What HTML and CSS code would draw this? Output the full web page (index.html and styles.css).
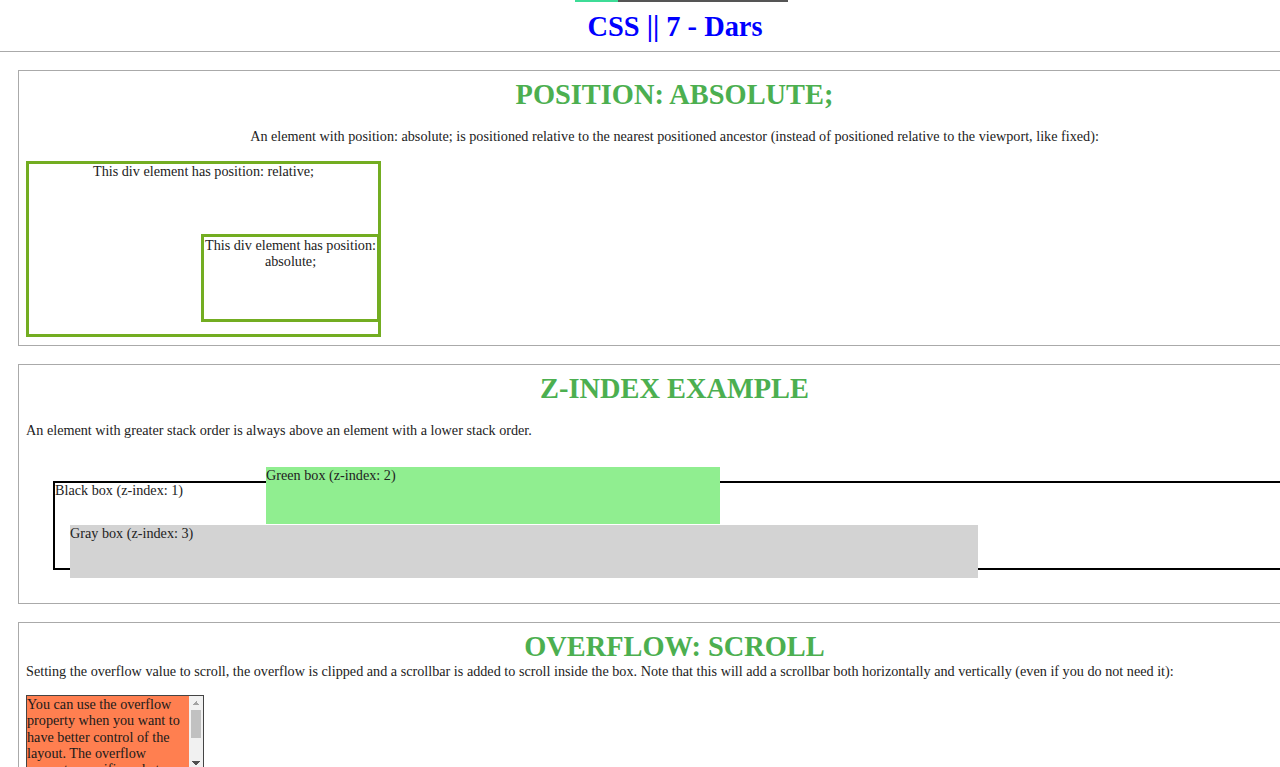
FILE: index.html
```html
<!DOCTYPE html>
<html lang="en">
<head>
<meta charset="utf-8">
<title>CSS || 7 - Dars</title>
<link rel="stylesheet" href="styles.css">
</head>
<body>
<header class="top">
  <div class="bar"></div>
  <h1 class="title">CSS || 7 - Dars</h1>
</header>
<main class="content">
  <section class="card">
    <h2 class="card-title">POSITION: ABSOLUTE;</h2>
    <p class="lead center">An element with position: absolute; is positioned relative to the nearest positioned ancestor (instead of positioned relative to the viewport, like fixed):</p>
    <div class="rel">This div element has position: relative;
      <div class="abs">This div element has position: absolute;</div>
    </div>
  </section>

  <section class="card">
    <h2 class="card-title">Z-INDEX EXAMPLE</h2>
    <p class="lead">An element with greater stack order is always above an element with a lower stack order.</p>
    <div class="zwrap">
      <div class="black">Black box (z-index: 1)</div>
      <div class="gray">Gray box (z-index: 3)</div>
      <div class="green">Green box (z-index: 2)</div>
    </div>
  </section>

  <section class="card">
    <h2 class="card-title">OVERFLOW: SCROLL</h2>
    <p class="lead tight">Setting the overflow value to scroll, the overflow is clipped and a scrollbar is added to scroll inside the box. Note that this will add a scrollbar both horizontally and vertically (even if you do not need it):</p>
    <div class="scroll">
      <div class="scroll-text">You can use the overflow property when you want to have better control of the layout. The overflow property specifies what happens if content overflows an element's box.</div>
      <div class="vbar">
        <span class="sb-btn sb-up"></span>
        <span class="sb-track"><span class="sb-thumb"></span></span>
        <span class="sb-btn sb-down"></span>
      </div>
      <div class="hbar">
        <span class="sb-btn sb-left"></span>
        <span class="sb-track-h"><span class="sb-thumb-h"></span></span>
        <span class="sb-btn sb-right"></span>
      </div>
      <div class="sb-corner"></div>
    </div>
  </section>
</main>
</body>
</html>
```

FILE: styles.css
```css
html {
  overflow: hidden;
}

body {
  margin: 0;
  width: 1350px;
  font-family: "Liberation Serif", "Times New Roman", serif;
  font-size: 14.2px;
  color: #222;
  background: #fff;
}

.top {
  border-bottom: 1px solid #aaa;
  padding-bottom: 9px;
}

.bar {
  margin-left: 575px;
  width: 213px;
  height: 2px;
  background: linear-gradient(to right, #3ddc97 0 43px, #555 43px);
}

.title {
  margin: 9px 0 0;
  font-size: 28.4px;
  line-height: 31px;
  text-align: center;
  color: #0000ff;
}

.content {
  padding: 18px 18px 0;
  display: flex;
  flex-direction: column;
  gap: 18px;
}

.card {
  border: 1px solid #aaa;
  padding: 8px 8px 8px 7px;
}

.card-title {
  margin: 0;
  font-size: 28.4px;
  line-height: 31px;
  text-align: center;
  color: #4caf50;
}

.lead {
  margin: 18px 0 0;
  line-height: 16px;
}

.lead.tight {
  margin-top: 1px;
}

.center {
  text-align: center;
}

.rel {
  position: relative;
  margin-top: 17px;
  width: 349px;
  height: 170px;
  border: 3px solid #73ad21;
  text-align: center;
  line-height: 15px;
}

.abs {
  position: absolute;
  top: 70px;
  right: -2px;
  width: 173px;
  height: 82px;
  border: 3px solid #73ad21;
  line-height: 16px;
}

.zwrap {
  position: relative;
  margin-top: 43px;
  line-height: 17px;
}

.black {
  position: relative;
  z-index: 1;
  border: 2px solid #000;
  height: 85px;
  margin: 0 26px 25px 27px;
  line-height: 15px;
}

.gray {
  position: absolute;
  z-index: 3;
  background: #d3d3d3;
  width: 70%;
  height: 53px;
  left: 44px;
  top: 44px;
}

.green {
  position: absolute;
  z-index: 2;
  background: #90ee90;
  width: 35%;
  height: 57px;
  left: 240px;
  top: -14px;
}

.scroll {
  margin-top: 16px;
  width: 176px;
  height: 88px;
  border: 1px solid #444;
  background: coral;
  display: grid;
  grid-template-columns: 1fr 14px;
  grid-template-rows: 1fr 14px;
  overflow: hidden;
}

.scroll-text {
  overflow: hidden;
  line-height: 16.33px;
  color: #1a1a1a;
}

.vbar {
  display: flex;
  flex-direction: column;
  background: #f1f1f1;
}

.hbar {
  display: flex;
  background: #f1f1f1;
}

.sb-corner {
  background: #dcdcdc;
}

.sb-btn {
  flex: 0 0 14px;
  height: 14px;
  background-repeat: no-repeat;
  background-position: center;
  background-size: 8px 4px;
}

.sb-up {
  background-image: conic-gradient(from 135deg at 50% 0, #a3a3a3 0 90deg, transparent 0);
}

.sb-down {
  background-image: conic-gradient(from -45deg at 50% 100%, #505050 0 90deg, transparent 0);
}

.sb-left {
  background-size: 4px 8px;
  background-image: conic-gradient(from 45deg at 0 50%, #a3a3a3 0 90deg, transparent 0);
}

.sb-right {
  background-size: 4px 8px;
  background-image: conic-gradient(from 225deg at 100% 50%, #505050 0 90deg, transparent 0);
}

.sb-track {
  flex: 1;
  padding: 0 2px;
}

.sb-thumb {
  display: block;
  height: 28px;
  background: #c1c1c1;
}

.sb-track-h {
  flex: 1;
  padding: 2px 0;
}

.sb-thumb-h {
  display: block;
  width: 60px;
  height: 10px;
  background: #c1c1c1;
}
```
